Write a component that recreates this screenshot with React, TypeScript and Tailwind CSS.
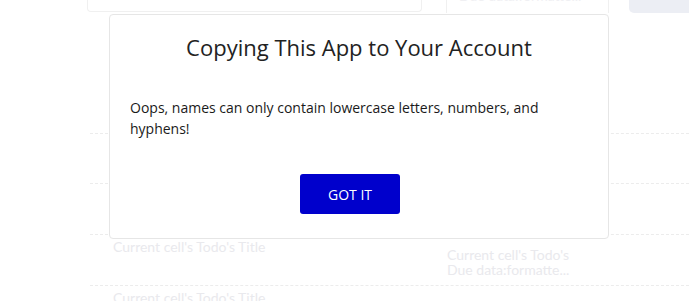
export default function App() {
    const rows = [
        { h: 'h-[50px]', title: false },
        { h: 'h-[50px]', title: false },
        { h: 'h-[51px]', title: false },
        { h: 'h-[51px]', title: true, due: true },
        { h: 'h-[51px]', title: true },
    ];

    return (
        <div className="relative w-[689px] h-[301px] overflow-hidden bg-white font-['Open_Sans',sans-serif]">
            {/* Faded page behind the dialog */}
            <div className="flex h-[13px]">
                <div className="ml-[87px] w-[335px] h-[12px] border border-t-0 border-[#f0f0f0] rounded-b-[4px]" />
                <div className="ml-[24px] w-[163px] h-[13px] border-x border-[#f0f0f0] overflow-hidden">
                    <div className="-mt-[11px] pl-[12px] text-[14px] leading-[14px] text-[#f0f0f3] font-['Lato',sans-serif]">Due data:formatte...</div>
                </div>
                <div className="ml-[20px] flex-1 h-[13px] bg-[#eceef4] rounded-bl-[5px]" />
            </div>
            <div className="h-[71px]" />
            <div className="ml-[90px] font-['Lato',sans-serif]">
                {rows.map((r, i) => (
                    <div key={i} className={`${r.h} flex border-b border-dashed border-[#ececec]`}>
                        <div className="w-[357px] shrink-0 pl-[23px] pt-[5px] text-[14px] leading-[14px] text-[#e9e9ed]">
                            {r.title && "Current cell's Todo's Title"}
                        </div>
                        <div className="pt-[12px] text-[14px] leading-[15px] text-[#e9e9ed]">
                            {r.due && (
                                <>
                                    <div>Current cell's Todo's</div>
                                    <div>Due data:formatte...</div>
                                </>
                            )}
                        </div>
                    </div>
                ))}
            </div>

            {/* Dialog */}
            <div className="absolute left-[109px] top-[14px] w-[500px] h-[225px] bg-white border border-[#e6e6e6] rounded-[4px] px-[20px] pt-[16px]">
                <h2 className="text-center text-[22px] leading-[33px] text-[#222]">Copying This App to Your Account</h2>
                <p className="mt-[33px] text-[14px] leading-[21px] text-[#1a1a1a]">
                    Oops, names can only contain lowercase letters, numbers, and hyphens!
                </p>
                <button className="mt-[35px] ml-[170px] w-[100px] h-[40px] rounded-[3px] bg-[#0000cc] text-white text-[14px]">
                    GOT IT
                </button>
            </div>
        </div>
    );
}
